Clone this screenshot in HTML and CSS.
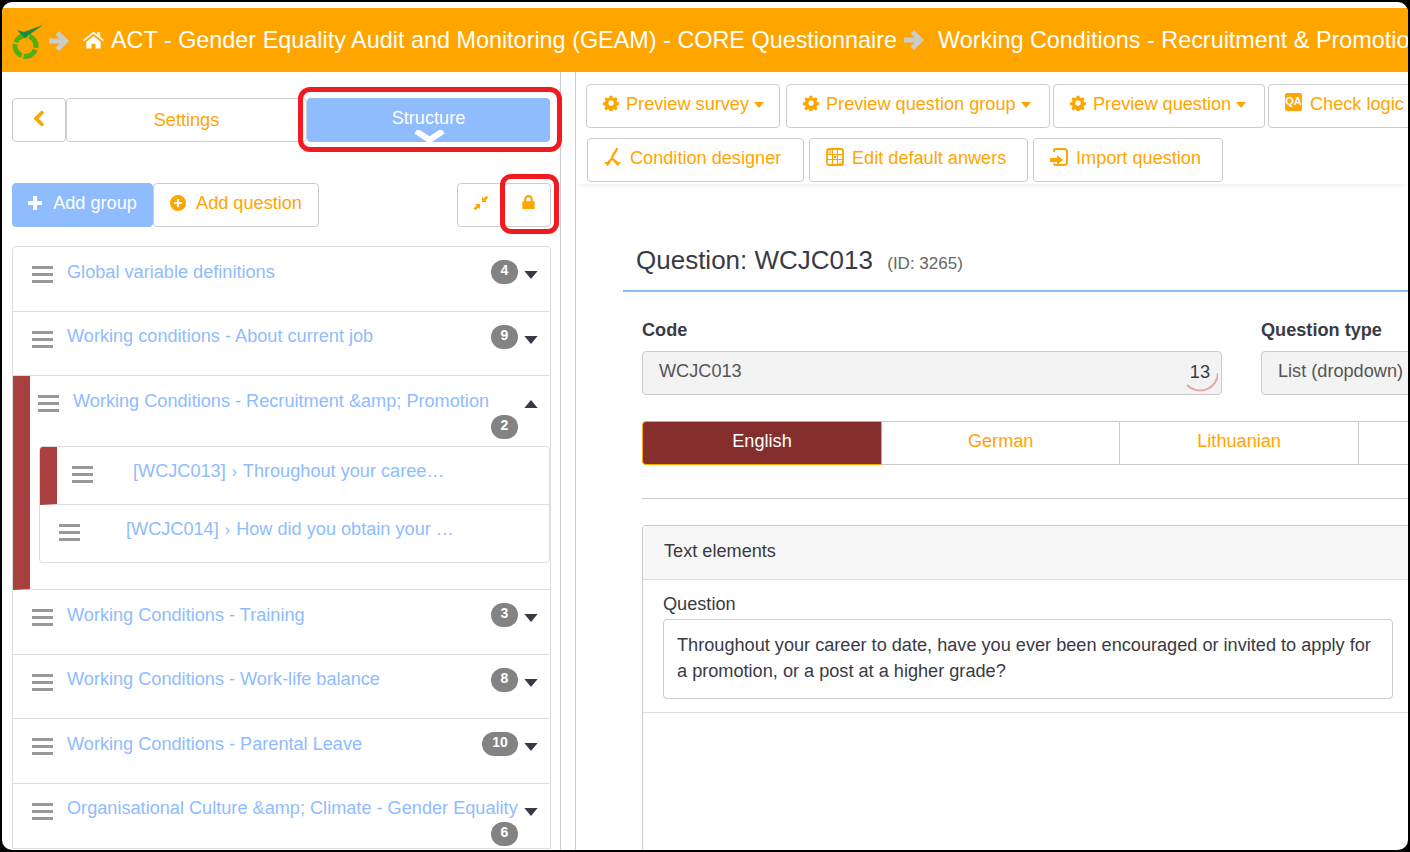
FILE: index.html
```html
<!DOCTYPE html>
<html lang="en">
<head>
    <meta charset="UTF-8">
    <title>Question WCJC013</title>
    <link rel="stylesheet" href="styles.css">
</head>
<body>
<svg class="defs" width="0" height="0">
    <symbol id="i-gear" viewBox="0 0 24 24"><path d="M10 1h4l.6 3.200 1.900.8 2.700-1.800 2.800 2.800-1.800 2.700.8 1.900 3 .6v4l-3 .6-.8 1.900 1.800 2.700-2.800 2.800-2.700-1.800-1.900.8-.6 3h-4l-.6-3-1.900-.8-2.700 1.800-2.800-2.800 1.800-2.700-.8-1.900-3-.6v-4l3-.6.8-1.900-1.800-2.700 2.800-2.800 2.700 1.800 1.900-.8zM12 8a4 4 0 1 0 0 8 4 4 0 0 0 0-8z" fill-rule="evenodd"/></symbol>
    <symbol id="i-caret" viewBox="0 0 10 6"><path d="M0 0h10L5 6z"/></symbol>
</svg>
<div class="window">
    <header class="topbar">
        <svg class="logo" viewBox="0 0 32 34">
            <circle cx="14.500" cy="21" r="10.500" fill="none" stroke="#4fb012" stroke-width="5" stroke-dasharray="14.500 2" transform="rotate(-70 14.500 21)"/>
            <path d="M6 5l7 2L32 0 13.500 13z" fill="#1d8a3f"/>
        </svg>
        <svg class="crumb-arrow" viewBox="0 0 20 20"><path d="M10 0l10 10-10 10-3.500-3.500 4-4H0V7.500h10.500l-4-4z"/></svg>
        <svg class="home" viewBox="0 0 22 18"><path d="M11 0l4 3.300V1h3v4.800L22 9l-1.200 1.400L11 2.400 1.200 10.400 0 9zM3.500 11L11 4.800l7.500 6.200v7H13v-5H9v5H3.500z"/></svg>
        <span class="crumb-text">ACT - Gender Equality Audit and Monitoring (GEAM) - CORE Questionnaire</span>
        <svg class="crumb-arrow second" viewBox="0 0 20 20"><path d="M10 0l10 10-10 10-3.500-3.500 4-4H0V7.500h10.500l-4-4z"/></svg>
        <span class="crumb-text">Working Conditions - Recruitment &amp; Promotion</span>
    </header>

    <div class="main">
        <aside class="sidebar">
            <div class="tabs">
                <button class="btn back"><svg viewBox="0 0 12 17"><path d="M10 1.500L3 8.500l7 7" fill="none" stroke="#ffa500" stroke-width="3.600"/></svg></button>
                <button class="btn settings">Settings</button>
                <div class="structure">Structure<svg class="notch" viewBox="0 0 33 12"><path d="M3 1l13.500 9L30 1" fill="none" stroke="#fff" stroke-width="6"/></svg></div>
                <span class="ring ring-tabs"></span>
            </div>

            <div class="actions">
                <button class="btn add-group"><svg viewBox="0 0 14 14"><path d="M5 0h4v5h5v4H9v5H5V9H0V5h5z"/></svg>Add group</button>
                <button class="btn add-question"><svg viewBox="0 0 16 16"><path d="M8 0a8 8 0 1 0 0 16A8 8 0 0 0 8 0zM7 4h2v3h3v2H9v3H7V9H4V7h3z" fill-rule="evenodd"/></svg>Add question</button>
                <span class="spacer"></span>
                <button class="btn square"><svg viewBox="0 0 16 16"><path d="M9 7V2l1.600 1.600L13.500.7l1.800 1.800-2.900 2.900L14 7zM7 9v5l-1.600-1.600-2.900 2.900-1.800-1.800 2.900-2.900L2 9z"/></svg></button>
                <button class="btn square lock"><svg viewBox="0 0 14 16"><path d="M2 7V5a5 5 0 0 1 10 0v2h1a1 1 0 0 1 1 1v7a1 1 0 0 1-1 1H1a1 1 0 0 1-1-1V8a1 1 0 0 1 1-1zm2.500 0h5V5a2.500 2.500 0 0 0-5 0z" fill-rule="evenodd"/></svg></button>
                <span class="ring ring-lock"></span>
            </div>

            <div class="groups">
                <div class="group">
                    <span class="bars"></span><a class="group-name">Global variable definitions</a>
                    <span class="badge">4</span><svg class="caret"><use href="#i-caret"/></svg>
                </div>
                <div class="group">
                    <span class="bars"></span><a class="group-name">Working conditions - About current job</a>
                    <span class="badge">9</span><svg class="caret"><use href="#i-caret"/></svg>
                </div>
                <div class="group open">
                    <div class="open-head">
                        <span class="bars"></span><a class="group-name">Working Conditions - Recruitment &amp;amp; Promotion</a>
                        <svg class="caret up"><use href="#i-caret"/></svg>
                        <span class="badge below">2</span>
                    </div>
                    <div class="questions">
                        <div class="question current"><span class="bars"></span><a>[WCJC013] <small>›</small> Throughout your caree…</a></div>
                        <div class="question"><span class="bars"></span><a>[WCJC014] <small>›</small> How did you obtain your …</a></div>
                    </div>
                </div>
                <div class="group">
                    <span class="bars"></span><a class="group-name">Working Conditions - Training</a>
                    <span class="badge">3</span><svg class="caret"><use href="#i-caret"/></svg>
                </div>
                <div class="group">
                    <span class="bars"></span><a class="group-name">Working Conditions - Work-life balance</a>
                    <span class="badge">8</span><svg class="caret"><use href="#i-caret"/></svg>
                </div>
                <div class="group">
                    <span class="bars"></span><a class="group-name">Working Conditions - Parental Leave</a>
                    <span class="badge wide">10</span><svg class="caret"><use href="#i-caret"/></svg>
                </div>
                <div class="group last">
                    <span class="bars"></span><a class="group-name">Organisational Culture &amp;amp; Climate - Gender Equality</a>
                    <svg class="caret"><use href="#i-caret"/></svg>
                    <span class="badge below">6</span>
                </div>
            </div>
        </aside>

        <section class="content">
            <div class="toolbar">
                <div class="tool-row">
                    <button class="btn tool w194"><svg class="ico"><use href="#i-gear"/></svg>Preview survey<svg class="tool-caret"><use href="#i-caret"/></svg></button>
                    <button class="btn tool w264"><svg class="ico"><use href="#i-gear"/></svg>Preview question group<svg class="tool-caret"><use href="#i-caret"/></svg></button>
                    <button class="btn tool w212"><svg class="ico"><use href="#i-gear"/></svg>Preview question<svg class="tool-caret"><use href="#i-caret"/></svg></button>
                    <button class="btn tool w160"><span class="qa">QA</span>Check logic</button>
                </div>
                <div class="tool-row second">
                    <button class="btn tool w217"><svg class="ico big" viewBox="0 0 18 18"><path d="M13 0c0 4-5 6-5 10M8 10c0 2-3 2-4 5M8 10c0 2 4 2 5 5" fill="none" stroke="#ffa500" stroke-width="2.200"/><path d="M0 14h7l-3.500 4zM10 14h7l-3.500 4z"/></svg>Condition designer</button>
                    <button class="btn tool w219"><svg class="ico big" viewBox="0 0 18 18"><rect x="1" y="1" width="16" height="16" rx="2" fill="none" stroke="#ffa500" stroke-width="1.800"/><path d="M6.500 1v16M11.500 1v16M1 6.500h16M1 11.500h16" fill="none" stroke="#ffa500" stroke-width="1"/><circle cx="3.800" cy="3.800" r="1.300" fill="#fff" stroke="#ffa500" stroke-width=".8"/><rect x="7.800" y="7.800" width="2.500" height="2.500"/><path d="M12.500 14.500l1.500 1.500 2.500-3" fill="none" stroke="#ffa500" stroke-width="1"/></svg>Edit default anwers</button>
                    <button class="btn tool w190"><svg class="ico big" viewBox="0 0 18 18"><path d="M4 4V3a2 2 0 0 1 2-2h8a3 3 0 0 1 3 3v10a3 3 0 0 1-3 3H6a2 2 0 0 1-2-1.500" fill="none" stroke="#ffa500" stroke-width="2"/><path d="M0 10h7V7l6 5-6 5v-3H0z"/></svg>Import question</button>
                </div>
            </div>

            <h2 class="q-title">Question: WCJC013 <small>(ID: 3265)</small></h2>

            <div class="fields">
                <div class="field code">
                    <label>Code</label>
                    <div class="input">WCJC013
                        <span class="count">13</span>
                        <svg class="arc" viewBox="0 0 34 34"><path d="M3 26a18 18 0 0 0 31-12" fill="none" stroke="#dfa9a6" stroke-width="2"/></svg>
                    </div>
                </div>
                <div class="field type">
                    <label>Question type</label>
                    <div class="input">List (dropdown)</div>
                </div>
            </div>

            <div class="langs">
                <a class="lang active">English</a>
                <a class="lang">German</a>
                <a class="lang">Lithuanian</a>
                <a class="lang rest"></a>
            </div>
            <hr class="rule">

            <div class="card">
                <div class="card-head">Text elements</div>
                <div class="card-body">
                    <label>Question</label>
                    <div class="textarea">Throughout your career to date, have you ever been encouraged or invited to apply for a promotion, or a post at a higher grade?</div>
                </div>
            </div>
        </section>
    </div>
</div>
</body>
</html>
```

FILE: styles.css
```css
* {
    box-sizing: border-box;
}

html, body {
    margin: 0;
    height: 100%;
    background: #000;
    overflow: hidden;
}

body {
    padding: 2px;
    font-family: "Liberation Sans", Arial, sans-serif;
    font-size: 18.150px;
    color: #3a3a45;
}

.defs {
    position: absolute;
}

button {
    font: inherit;
}

.window {
    height: 848px;
    padding-top: 6px;
    background: #fff;
    border-radius: 10px;
    overflow: hidden;
    display: flex;
    flex-direction: column;
}

/* top bar */
.topbar {
    height: 64px;
    flex: none;
    background: #ffa500;
    color: #fff;
    font-size: 23.400px;
    white-space: nowrap;
    overflow: hidden;
    display: flex;
    align-items: center;
    padding-left: 9px;
}

.logo {
    width: 32px;
    height: 34px;
    flex: none;
    margin-top: 4px;
}

.crumb-arrow {
    width: 20px;
    height: 20px;
    flex: none;
    fill: #ccc;
    margin-left: 6px;
    margin-top: 2px;
}

.crumb-arrow.second {
    margin: 0 14px 0 7px;
}

.home {
    width: 21px;
    height: 18px;
    flex: none;
    fill: #fff;
    margin: 0 7px 0 14px;
}

.crumb-text {
    flex: none;
}

.main {
    flex: 1;
    display: flex;
    min-height: 0;
}

/* buttons */
.btn {
    background: #fff;
    border: 1px solid #ccc;
    border-radius: 4px;
    color: #ffa500;
    height: 44px;
    padding: 0;
    display: flex;
    align-items: center;
    justify-content: center;
    white-space: nowrap;
    flex: none;
}

/* left column */
.sidebar {
    width: 559px;
    flex: none;
    border-right: 1px solid #ccc;
    padding: 26px 9px 0 10px;
}

.tabs {
    position: relative;
    display: flex;
    height: 44px;
}

.back {
    width: 54px;
    padding-bottom: 4px;
}

.back svg {
    width: 12px;
    height: 17px;
}

.settings {
    width: 241px;
}

.structure {
    position: relative;
    width: 243px;
    background: #8fbcff;
    color: #fff;
    border-radius: 4px;
    display: flex;
    align-items: center;
    justify-content: center;
    padding-bottom: 4px;
}

.notch {
    position: absolute;
    left: 106px;
    bottom: 0;
    width: 33px;
    height: 12px;
}

.ring {
    position: absolute;
    border: 5px solid #f01a20;
    pointer-events: none;
}

.ring-tabs {
    left: 286px;
    top: -11px;
    width: 264px;
    height: 65px;
    border-radius: 12px;
}

.ring-lock {
    right: -8px;
    top: -9px;
    width: 59px;
    height: 60px;
    border-radius: 11px;
}

.actions {
    position: relative;
    display: flex;
    margin-top: 41px;
    width: 539px;
}

.add-group, .add-question {
    padding-bottom: 3px;
}

.add-group {
    width: 141px;
    background: #8fbcff;
    border-color: #8fbcff;
    color: #fff;
}

.add-group svg {
    width: 14px;
    height: 14px;
    fill: #fff;
    margin-right: 11px;
    margin-top: -1px;
}

.add-question {
    width: 166px;
}

.add-question svg {
    width: 16px;
    height: 16px;
    fill: #ffa500;
    margin-right: 10px;
    margin-top: -1px;
}

.spacer {
    flex: 1;
}

.square {
    width: 47px;
}

.square svg {
    width: 16px;
    height: 16px;
    fill: #ffa500;
    margin-top: -4px;
}

.square.lock svg {
    width: 13px;
    height: 14px;
    margin-top: -6px;
    margin-left: 1px;
}

.groups {
    margin-top: 19px;
    width: 539px;
    border: 1px solid #ddd;
    border-radius: 4px 4px 0 0;
}

.group {
    position: relative;
    height: 64.500px;
    border-bottom: 1px solid #ddd;
    display: flex;
    padding: 14.500px 12px 0 19px;
}

.bars {
    display: block;
    width: 21px;
    height: 17px;
    flex: none;
    margin-top: 4.500px;
    border-top: 3px solid #999;
    border-bottom: 3px solid #999;
    position: relative;
}

.bars::after {
    content: "";
    position: absolute;
    left: 0;
    right: 0;
    top: 4px;
    height: 3px;
    background: #999;
}

.group-name, .question a {
    color: #8fbcff;
    white-space: nowrap;
}

.group-name {
    margin-left: 14px;
    flex: 1;
}

.badge {
    height: 24px;
    min-width: 27px;
    padding: 0 7px;
    margin: -1.500px 6px 0 0;
    background: #838383;
    color: #fff;
    border-radius: 12px;
    font-size: 14px;
    font-weight: bold;
    line-height: 20px;
    text-align: center;
    flex: none;
}

.badge.wide {
    min-width: 36px;
}

.badge.below {
    position: absolute;
    right: 32px;
    bottom: 2px;
    margin: 0;
}

.caret {
    width: 14px;
    height: 8px;
    flex: none;
    margin-top: 9.500px;
    fill: #3a3a45;
}

.caret.up {
    transform: scaleY(-1);
}

.group.open {
    height: 214px;
    display: block;
    padding: 0;
    border-left: 17px solid #a8403f;
}

.open-head {
    display: flex;
    padding: 14.500px 12px 0 8px;
    height: 70px;
    position: relative;
}

.open-head .group-name {
    margin-left: 14px;
}

.open-head .badge.below {
    right: 32px;
    bottom: 7px;
}

.questions {
    margin-left: 9px;
    border: 1px solid #ddd;
    border-radius: 4px;
    overflow: hidden;
}

.question {
    height: 57px;
    display: flex;
    padding-left: 19px;
    padding-top: 14px;
}

.question .bars {
    margin-top: 5px;
}

.question a {
    margin-left: 46px;
}

.question small {
    font-size: 16px;
    margin: 0 1px;
}

.question.current {
    height: 58px;
    border-left: 17px solid #a8403f;
    border-bottom: 1px solid #ddd;
    padding-left: 15px;
}

.question.current a {
    margin-left: 40px;
}

.group.last {
    border-bottom: none;
}

/* right column */
.content {
    flex: 1;
    min-width: 0;
    margin-left: 14px;
    border-left: 1px solid #ccc;
    position: relative;
    overflow: hidden;
}

.toolbar {
    padding-top: 12px;
    height: 112px;
    box-shadow: 0 4px 6px -3px rgba(0, 0, 0, 0.08);
}

.tool-row {
    display: flex;
    gap: 3px;
    padding-left: 10px;
    white-space: nowrap;
}

.tool-row.second {
    margin-top: 10px;
    gap: 5px;
    padding-left: 11px;
}

.tool {
    justify-content: flex-start;
    padding-left: 16px;
    padding-bottom: 3px;
}

.w194 { width: 194px; margin-right: 3px; }
.w264 { width: 264px; }
.w212 { width: 212px; }
.w160 { width: 160px; }
.w217 { width: 217px; }
.w219 { width: 219px; }
.w190 { width: 190px; }

.ico {
    width: 16px;
    height: 16px;
    fill: #ffa500;
    margin-right: 7px;
    margin-top: -3px;
    flex: none;
}

.ico.big {
    width: 18px;
    height: 18px;
    margin-right: 8px;
    margin-top: -4px;
}

.tool-caret {
    width: 10px;
    height: 6px;
    fill: #ffa500;
    margin-left: 5px;
    margin-top: 1px;
}

.qa {
    width: 17px;
    height: 18px;
    margin: -6px 8px 0 0;
    background: #ffa500;
    color: #fff;
    border-radius: 2px;
    font-size: 11px;
    font-weight: bold;
    line-height: 16px;
    text-align: center;
}

.q-title {
    margin: 44px 0 0 47px;
    padding: 17px 0 11px 13px;
    border-bottom: 2px solid #8fbcff;
    font-size: 26px;
    font-weight: normal;
    line-height: 30px;
    white-space: nowrap;
}

.q-title small {
    margin-left: 7px;
    font-size: 17px;
    color: #666;
}

.fields {
    display: flex;
    gap: 39px;
    margin: 26px 0 0 66px;
}

.field label {
    display: block;
    font-weight: bold;
    line-height: 24px;
}

.field.code {
    width: 580px;
    flex: none;
}

.field.type {
    width: 200px;
    flex: none;
}

.input {
    position: relative;
    margin-top: 9px;
    height: 44px;
    padding: 9px 16px;
    background: #f3f3f3;
    border: 1px solid #ccc;
    border-radius: 4px;
    color: #555;
    white-space: nowrap;
}

.count {
    position: absolute;
    right: 11px;
    top: 10px;
    color: #3a3a45;
}

.arc {
    position: absolute;
    right: 3px;
    top: 7px;
    width: 34px;
    height: 34px;
}

.langs {
    display: flex;
    margin: 26px 0 0 66px;
    height: 44px;
}

.lang {
    width: 238.400px;
    flex: none;
    border: 1px solid #ccc;
    border-left: none;
    color: #ffa500;
    display: flex;
    align-items: center;
    justify-content: center;
    padding-bottom: 3px;
}

.lang.active {
    width: 240px;
    background: #842f2e;
    border: 1px solid #ffa500;
    border-radius: 4px 0 0 4px;
    color: #fff;
}

.rule {
    margin: 33px 0 0 66px;
    border: none;
    border-top: 1px solid #ccc;
}

.card {
    margin: 26px 0 0 66px;
    border: 1px solid #ccc;
    border-right: none;
    border-bottom: none;
    border-radius: 4px 0 0 0;
    height: 400px;
}

.card-head {
    height: 54px;
    padding: 15px 21px;
    background: #f7f7f7;
    border-bottom: 1px solid #ddd;
}

.card-body {
    padding: 14px 15px 13px 20px;
    height: 133px;
    border-bottom: 1px solid #ddd;
}

.card-body label {
    display: block;
    line-height: 20px;
}

.textarea {
    margin-top: 5px;
    height: 80px;
    padding: 12px 13px;
    border: 1px solid #ccc;
    border-radius: 4px;
    line-height: 26px;
}
```
